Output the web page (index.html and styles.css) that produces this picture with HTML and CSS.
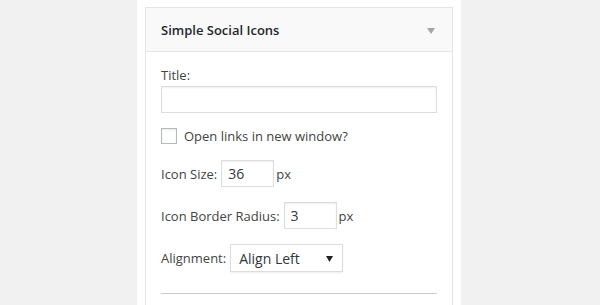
FILE: index.html
```html
<!DOCTYPE html>
<html>
<head>
<meta charset="utf-8">
<link rel="stylesheet" href="styles.css">
</head>
<body>
<div class="panel">
  <div class="widget">
    <div class="widget-top">
      <span class="widget-title">Simple Social Icons</span>
      <svg class="toggle" width="8" height="6" viewBox="0 0 8 6"><path d="M0 0H8L4 6Z" fill="#a0a5aa"/></svg>
    </div>
    <div class="widget-content">
      <label class="label-block">Title:</label>
      <input class="text wide" type="text" value="">
      <div class="row check-row">
        <span class="checkbox"></span>
        <span class="label">Open links in new window?</span>
      </div>
      <div class="row">
        <span class="label">Icon Size:</span>
        <input class="text small" type="text" value="36">
        <span class="label unit">px</span>
      </div>
      <div class="row">
        <span class="label">Icon Border Radius:</span>
        <input class="text small" type="text" value="3">
        <span class="label unit">px</span>
      </div>
      <div class="row">
        <span class="label">Alignment:</span>
        <div class="select">
          <span class="select-value">Align Left</span>
          <svg class="select-arrow" width="7" height="6" viewBox="0 0 7 6"><path d="M0 0H7L3.5 6Z" fill="#222"/></svg>
        </div>
      </div>
      <div class="divider"></div>
    </div>
  </div>
</div>
</body>
</html>
```
FILE: styles.css
```css
html, body {
  margin: 0;
  padding: 0;
  height: 100%;
}
body {
  background: #f1f1f1;
  font-family: "Open Sans", "Liberation Sans", sans-serif;
  font-size: 13px;
  color: #444;
  overflow: hidden;
}
.panel {
  margin-left: 137px;
  width: 324px;
  height: 305px;
  background: #fff;
  padding: 7px 8px 0 8px;
  box-sizing: border-box;
  overflow: hidden;
}
.widget {
  border: 1px solid #e5e5e5;
  border-bottom: none;
  background: #fff;
  height: 298px;
  box-sizing: border-box;
}
.widget-top {
  display: flex;
  align-items: center;
  justify-content: space-between;
  height: 43px;
  background: #f9f9f9;
  border-bottom: 1px solid #e5e5e5;
  padding: 0 17px 0 15px;
}
.widget-title {
  font-weight: 600;
  font-size: 13px;
  color: #23282d;
  margin-top: 1px;
}
.toggle {
  display: block;
  margin-top: 2px;
}
.widget-content {
  display: flex;
  flex-direction: column;
  padding: 0 15px;
}
.label-block {
  display: block;
  line-height: 18px;
  margin-top: 14px;
}
.label {
  line-height: 18px;
}
.unit {
  margin-left: -2px;
}
.text {
  box-sizing: border-box;
  height: 27px;
  border: 1px solid #ddd;
  box-shadow: inset 0 1px 2px rgba(0,0,0,.07);
  background: #fff;
  font-family: "Open Sans", "Liberation Sans", sans-serif;
  font-size: 14px;
  color: #32373c;
  padding: 0 6px;
  margin: 0;
  outline: none;
  border-radius: 0;
}
.wide {
  width: 276px;
  margin-top: 2px;
}
.small {
  width: 53px;
}
.row {
  display: flex;
  align-items: center;
  gap: 4px;
  margin-top: 15px;
}
.check-row {
  gap: 7px;
  margin-top: 14px;
}
.checkbox {
  width: 16px;
  height: 16px;
  box-sizing: border-box;
  border: 1px solid #b4b9be;
  background: #fff;
  box-shadow: inset 0 1px 2px rgba(0,0,0,.1);
}
.select {
  position: relative;
  box-sizing: border-box;
  width: 113px;
  height: 28px;
  border: 1px solid #ddd;
  box-shadow: 0 1px 2px rgba(0,0,0,.07);
  background: #fff;
  display: flex;
  align-items: center;
  padding-left: 8px;
  font-size: 14px;
  color: #32373c;
}
.select-arrow {
  position: absolute;
  right: 9px;
  top: 11px;
}
.divider {
  margin-top: 21px;
  height: 1px;
  background: #ccc;
  width: 276px;
}
```
